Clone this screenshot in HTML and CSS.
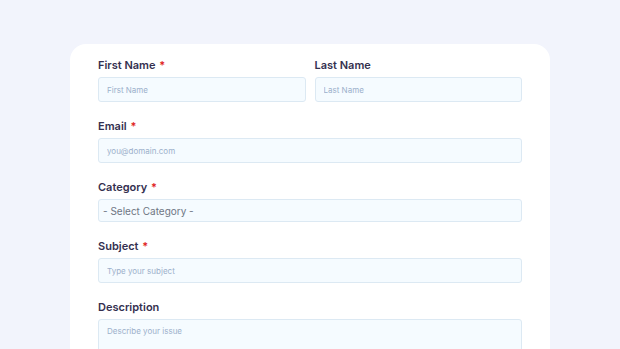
FILE: index.html
```html
<html>
<head>
  <link rel="stylesheet" href="styles.css">
</head>
<body>
  <div class="card">
    <form class="ticket-form">
      <div class="row">
        <div class="field">
          <label>First Name <span class="req">*</span></label>
          <input type="text" placeholder="First Name">
        </div>
        <div class="field">
          <label>Last Name</label>
          <input type="text" placeholder="Last Name">
        </div>
      </div>
      <div class="field">
        <label>Email <span class="req">*</span></label>
        <input type="text" placeholder="you@domain.com">
      </div>
      <div class="field">
        <label>Category <span class="req">*</span></label>
        <div class="select">- Select Category -</div>
      </div>
      <div class="field">
        <label>Subject <span class="req">*</span></label>
        <input type="text" placeholder="Type your subject">
      </div>
      <div class="field">
        <label>Description</label>
        <textarea placeholder="Describe your issue"></textarea>
      </div>
    </form>
  </div>
</body>
</html>
```

FILE: styles.css
```css
body
{
  margin: 0;
  background-color: #f2f4fc;
  font-family: "Inter", "Lato", sans-serif;
  overflow: hidden;
  height: 349px;
}

.card
{
  width: 480px;
  height: 305px;
  margin: 44px auto 0;
  background-color: #ffffff;
  border-radius: 16px 16px 0 0;
  padding: 14px 28px 0;
  box-sizing: border-box;
  overflow: hidden;
}

.ticket-form
{
  display: flex;
  flex-direction: column;
  gap: 17px;
}

.row
{
  display: flex;
  gap: 9px;
}

.row .field
{
  flex: 1;
}

.field
{
  display: flex;
  flex-direction: column;
}

label
{
  font-size: 11px;
  line-height: 14px;
  font-weight: 600;
  color: #34304f;
  margin-bottom: 5px;
}

.req
{
  color: #e02424;
  margin-left: 1px;
}

input, textarea, .select
{
  height: 25px;
  box-sizing: border-box;
  border: 1px solid #dce9f3;
  border-radius: 3px;
  background-color: #f5fbff;
  padding: 0 8px;
  font-family: "Inter", sans-serif;
  font-size: 8px;
  color: #333;
  outline: none;
}

input::placeholder, textarea::placeholder
{
  color: #9cb0cb;
}

.select
{
  height: 23px;
  display: flex;
  align-items: center;
  padding: 0 4px;
  font-size: 10px;
  color: #6f7683;
}

textarea
{
  height: 60px;
  padding: 6px 8px;
  resize: none;
}
```
